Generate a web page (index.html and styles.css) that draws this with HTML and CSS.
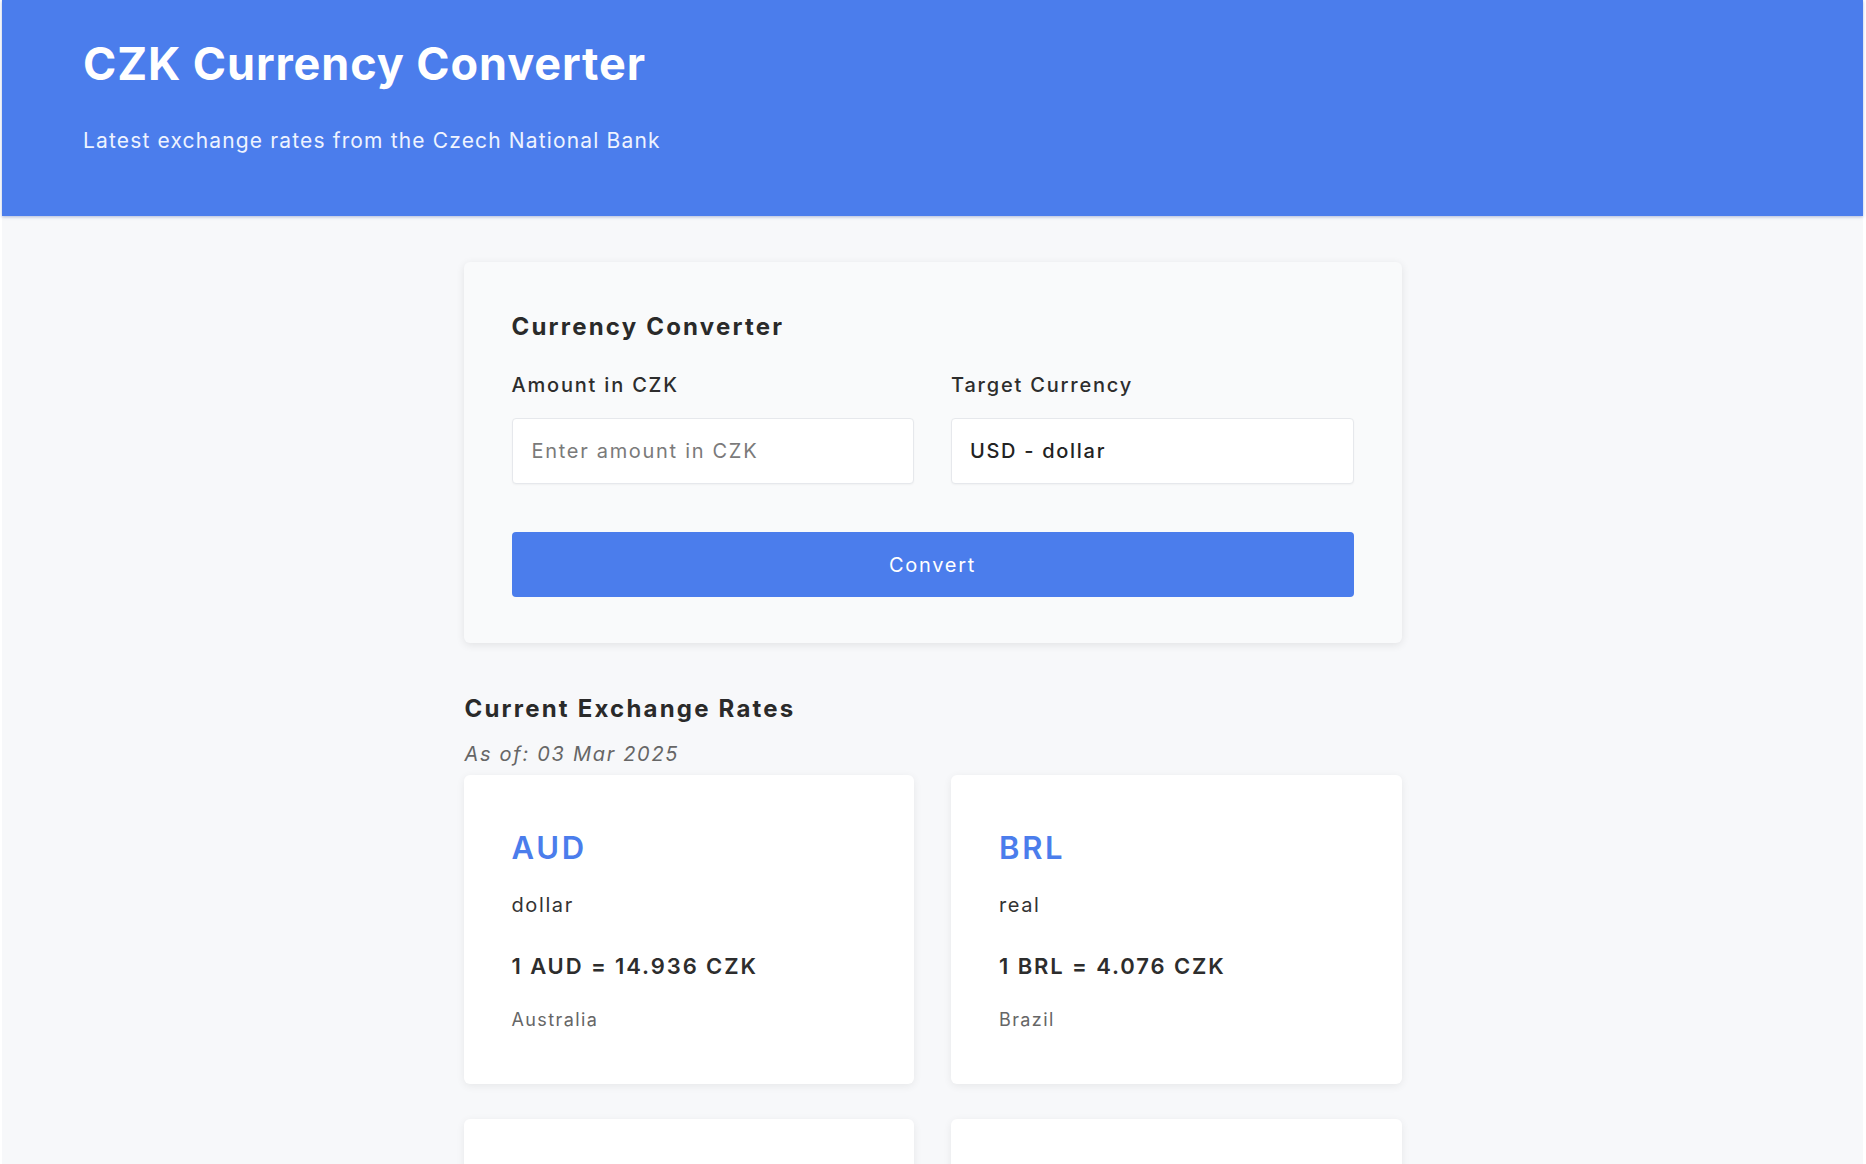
FILE: index.html
```html
<!DOCTYPE html>
<html lang="en">
<head>
<meta charset="utf-8">
<title>CZK Currency Converter</title>
<link rel="stylesheet" href="styles.css">
</head>
<body>
<div class="page">
  <header class="site-header">
    <h1 class="site-title">CZK Currency Converter</h1>
    <p class="site-subtitle">Latest exchange rates from the Czech National Bank</p>
  </header>
  <main class="container">
    <section class="converter">
      <h2 class="section-title">Currency Converter</h2>
      <div class="form-row">
        <div class="field">
          <label class="field-label" for="amount">Amount in CZK</label>
          <input class="field-input" id="amount" type="text" placeholder="Enter amount in CZK">
        </div>
        <div class="field">
          <label class="field-label" for="target">Target Currency</label>
          <select class="field-input field-select" id="target">
            <option>USD - dollar</option>
          </select>
        </div>
      </div>
      <button class="convert-btn" type="button">Convert</button>
    </section>

    <section class="rates">
      <h2 class="section-title">Current Exchange Rates</h2>
      <p class="rates-date">As of: 03 Mar 2025</p>
      <div class="rates-grid">
        <div class="rate-card">
          <h3 class="rate-code">AUD</h3>
          <p class="rate-name">dollar</p>
          <p class="rate-value">1 AUD = 14.936 CZK</p>
          <p class="rate-country">Australia</p>
        </div>
        <div class="rate-card">
          <h3 class="rate-code">BRL</h3>
          <p class="rate-name">real</p>
          <p class="rate-value">1 BRL = 4.076 CZK</p>
          <p class="rate-country">Brazil</p>
        </div>
        <div class="rate-card">
          <h3 class="rate-code">BGN</h3>
          <p class="rate-name">lev</p>
          <p class="rate-value">1 BGN = 12.765 CZK</p>
          <p class="rate-country">Bulgaria</p>
        </div>
        <div class="rate-card">
          <h3 class="rate-code">CAD</h3>
          <p class="rate-name">dollar</p>
          <p class="rate-value">1 CAD = 16.611 CZK</p>
          <p class="rate-country">Canada</p>
        </div>
      </div>
    </section>
  </main>
</div>
</body>
</html>
```

FILE: styles.css
```css
html {
  background: #ffffff;
}

body {
  margin: 0;
  font-family: Inter, "Noto Sans", "Liberation Sans", sans-serif;
  color: #2d2d2d;
}

.page {
  margin: 0 3px 0 2px;
  background: #f7f8fa;
  min-height: 1300px;
}

.site-header {
  background: #4b7dec;
  height: 216px;
  box-sizing: border-box;
  padding: 36px 81px 0;
  color: #ffffff;
  box-shadow: 0 1px 3px rgba(40, 70, 160, 0.35);
}

.site-title {
  margin: 0;
  font-size: 45px;
  font-weight: 700;
  line-height: 56px;
  letter-spacing: 0.9px;
}

.site-subtitle {
  margin: 36px 0 0;
  font-size: 21px;
  line-height: 26px;
  font-weight: 400;
  letter-spacing: 1.15px;
  color: #eef3ff;
}

.container {
  width: 938px;
  margin: 46px auto 0;
}

.converter {
  background: #f9fafb;
  border-radius: 6px;
  box-shadow: 0 2px 8px rgba(0, 0, 0, 0.09);
  padding: 50px 48px 46px;
}

.section-title {
  margin: 0;
  font-size: 24px;
  line-height: 29px;
  font-weight: 700;
  letter-spacing: 2.2px;
  color: #2a2a2a;
}

.form-row {
  display: flex;
  gap: 37px;
  margin-top: 32px;
}

.field {
  flex: 1;
  display: flex;
  flex-direction: column;
}

.field-label {
  font-size: 20px;
  line-height: 24px;
  font-weight: 500;
  letter-spacing: 1.8px;
  color: #2d2d2d;
  margin-bottom: 21px;
}

.field-input {
  height: 66px;
  box-sizing: border-box;
  border: 1px solid #e6e8ec;
  border-radius: 4px;
  background: #ffffff;
  padding: 0 19px;
  font-family: inherit;
  font-size: 20px;
  letter-spacing: 1.7px;
  color: #222222;
  box-shadow: 0 1px 2px rgba(0, 0, 0, 0.04);
  outline: none;
}

.field-input::placeholder {
  color: #7a7a7a;
}

.field-select {
  appearance: none;
  -webkit-appearance: none;
  font-weight: 500;
  padding-left: 18px;
}

.convert-btn {
  display: block;
  width: 100%;
  height: 65px;
  margin-top: 48px;
  border: none;
  border-radius: 4px;
  background: #4b7dec;
  color: #ffffff;
  font-family: inherit;
  font-size: 20px;
  font-weight: 400;
  letter-spacing: 1.7px;
}

.rates {
  margin-top: 51px;
}

.rates .section-title {
  margin-left: 1px;
}

.rates-date {
  margin: 19px 0 9px 1px;
  font-size: 20px;
  line-height: 24px;
  font-style: italic;
  letter-spacing: 1.7px;
  color: #666666;
}

.rates-grid {
  display: grid;
  grid-template-columns: 1fr 1fr;
  column-gap: 37px;
  row-gap: 35px;
}

.rate-card {
  background: #ffffff;
  border-radius: 6px;
  box-shadow: 0 2px 8px rgba(0, 0, 0, 0.07);
  height: 309px;
  box-sizing: border-box;
  padding: 54px 47px 0 48px;
}

.rate-code {
  margin: 0;
  font-size: 31px;
  line-height: 37px;
  font-weight: 600;
  letter-spacing: 2.7px;
  color: #4b7dec;
}

.rate-name {
  margin: 27px 0 0;
  font-size: 20px;
  line-height: 24px;
  letter-spacing: 1.6px;
  color: #333333;
}

.rate-value {
  margin: 36px 0 0;
  font-size: 22px;
  line-height: 27px;
  font-weight: 600;
  letter-spacing: 1.9px;
  color: #2d2d2d;
}

.rate-country {
  margin: 29px 0 0;
  font-size: 18px;
  line-height: 22px;
  letter-spacing: 1.4px;
  color: #666666;
}
```
